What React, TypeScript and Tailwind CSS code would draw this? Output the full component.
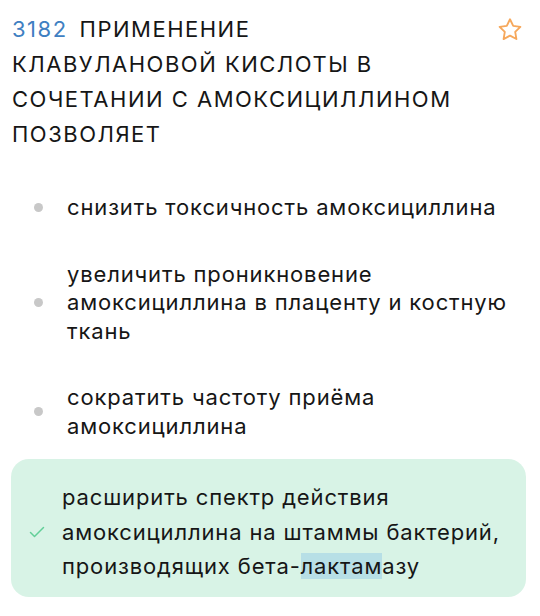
import React from "react";

function Star() {
  return (
    <svg width="28" height="28" viewBox="0 0 24 24" fill="none" stroke="#f6a85c" strokeWidth="1.6" strokeLinejoin="round">
      <path d="M12 2.8l2.75 5.6 6.15.9-4.45 4.33 1.05 6.12L12 16.86l-5.5 2.9 1.05-6.13L3.1 9.3l6.15-.9L12 2.8z" />
    </svg>
  );
}

function Check() {
  return (
    <svg width="16" height="12" viewBox="0 0 16 12" fill="none" stroke="#62cf98" strokeWidth="1.5" strokeLinecap="round" strokeLinejoin="round">
      <path d="M1.5 6.5l4 4L14.5 1.5" />
    </svg>
  );
}

const options = [
  "снизить токсичность амоксициллина",
  "увеличить проникновение амоксициллина в плаценту и костную ткань",
  "сократить частоту приёма амоксициллина",
];

export default function App() {
  return (
    <div
      className="w-[540px] h-[616px] bg-white overflow-hidden text-[#161616]"
      style={{ fontFamily: "Inter, 'Noto Sans', sans-serif" }}
    >
      <div className="flex items-start pl-3 pr-4 pt-[12px]">
        <h1 className="flex-1 text-[22px] leading-[35px] tracking-[1.5px] font-normal uppercase">
          <span className="text-[#3f80c2] mr-[12px]">3182</span>
          ПРИМЕНЕНИЕ
          <br />
          КЛАВУЛАНОВОЙ КИСЛОТЫ В
          <br />
          СОЧЕТАНИИ С АМОКСИЦИЛЛИНОМ
          <br />
          ПОЗВОЛЯЕТ
        </h1>
        <div className="pt-[4px]">
          <Star />
        </div>
      </div>

      <ul className="mt-[22px] pl-[11px] pr-[14px]">
        {options.map((text) => (
          <li key={text} className="flex items-center py-[19px]">
            <span className="w-[56px] shrink-0 flex justify-start pl-[23px]">
              <span className="w-[9px] h-[9px] rounded-full bg-[#c8c8c8]" />
            </span>
            <span className="text-[22px] leading-[28.5px] tracking-[0.85px]">{text}</span>
          </li>
        ))}
        <li className="flex items-center rounded-[18px] bg-[#d8f3e6] pt-[21px] pb-[13px]">
          <span className="w-[51px] shrink-0 flex pl-[18px]">
            <Check />
          </span>
          <span className="text-[22px] leading-[34.5px] tracking-[0.85px] pr-2">
            расширить спектр действия амоксициллина на штаммы бактерий, производящих бета-
            <span className="bg-[#b7dfe6]">лактам</span>азу
          </span>
        </li>
      </ul>
    </div>
  );
}
